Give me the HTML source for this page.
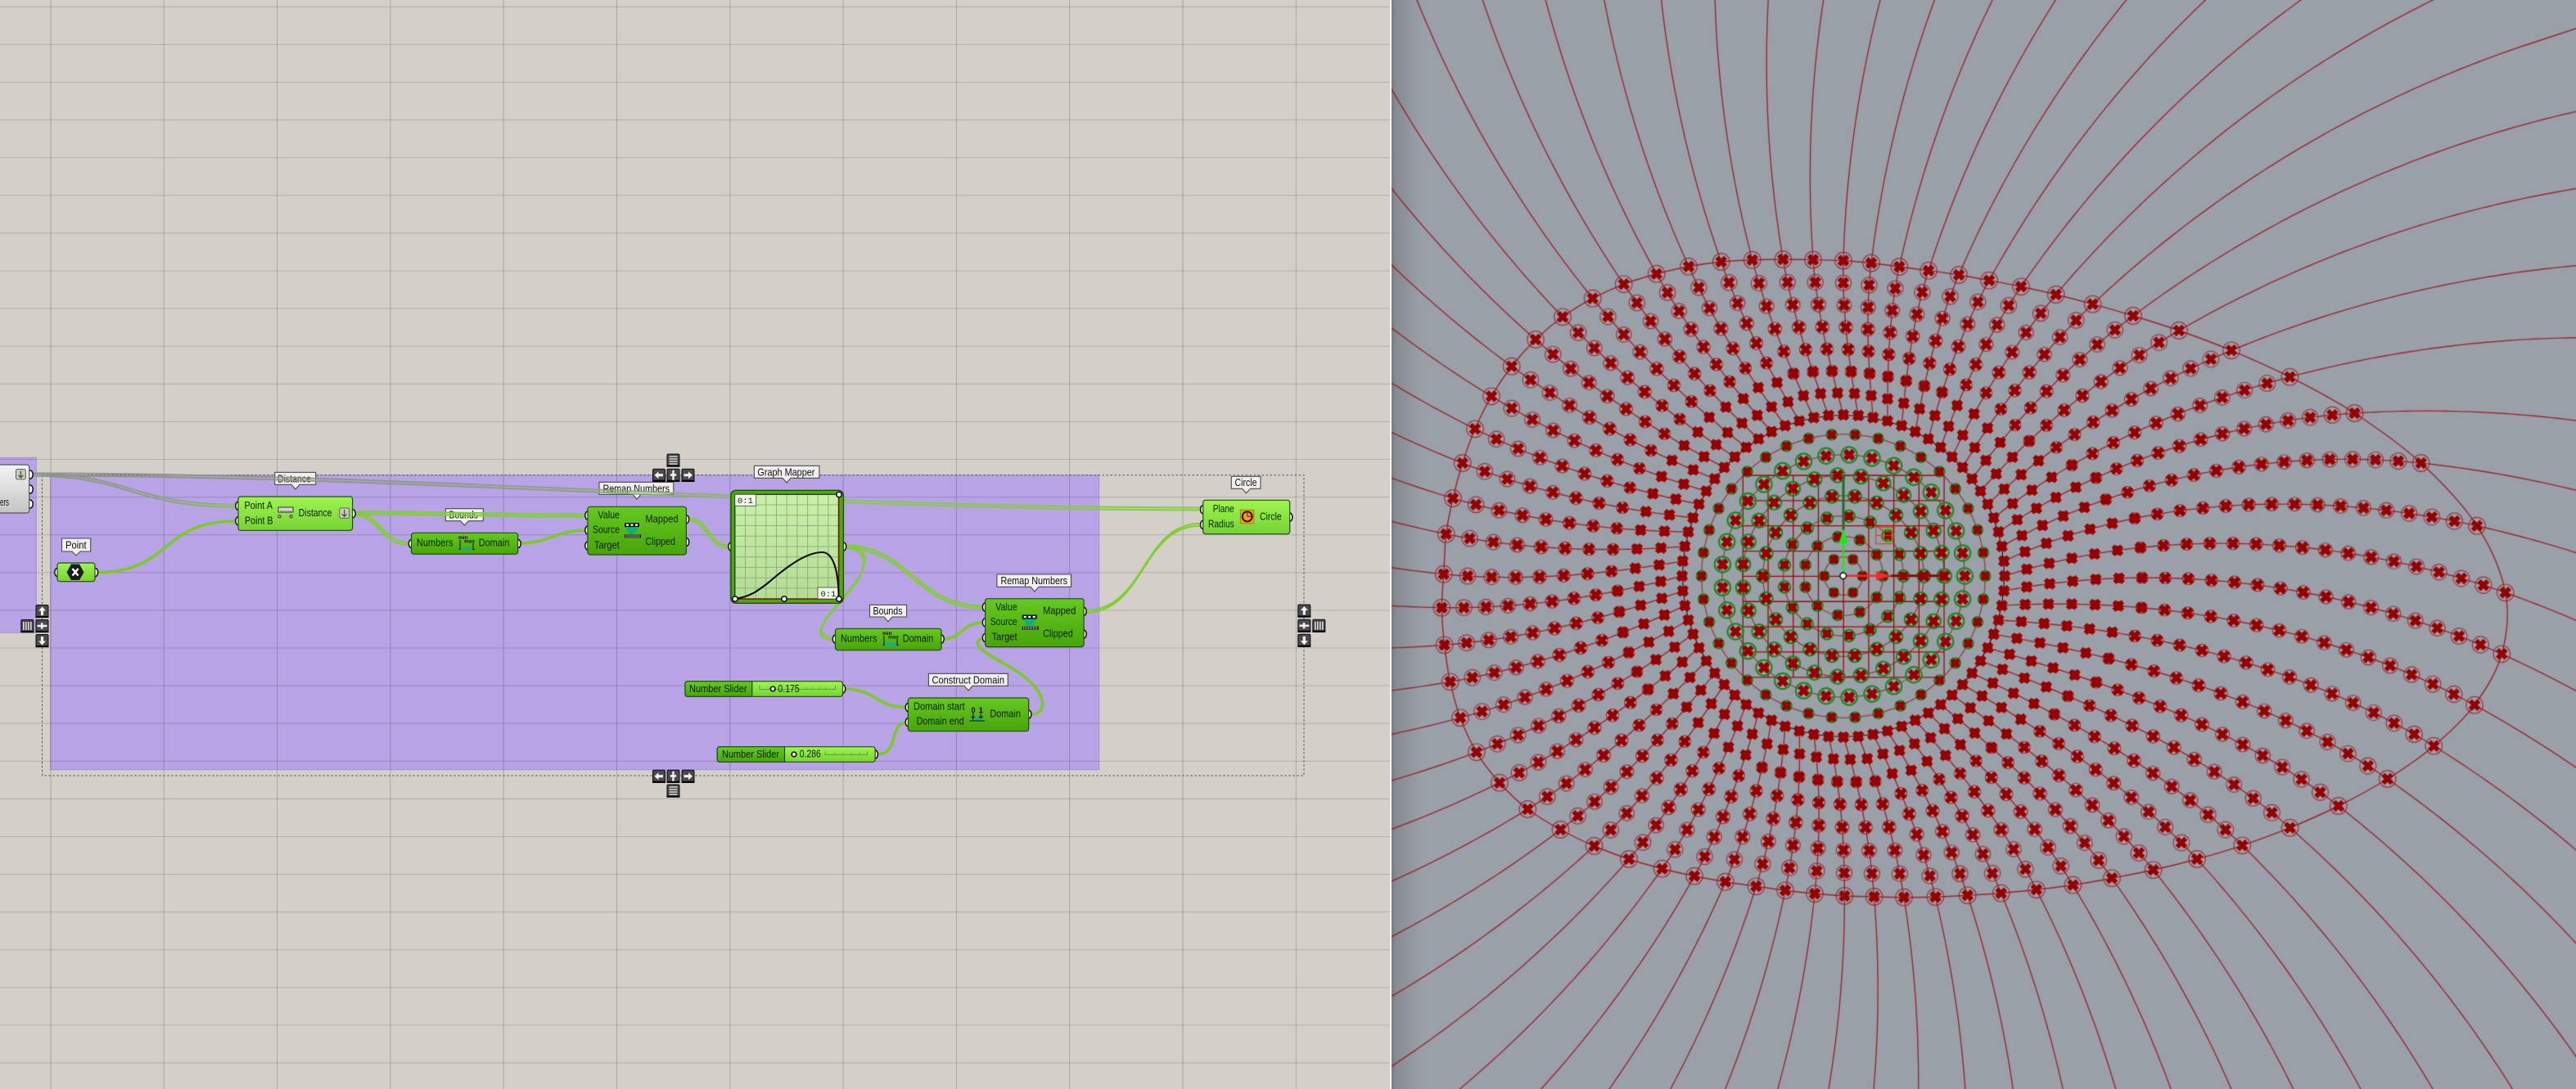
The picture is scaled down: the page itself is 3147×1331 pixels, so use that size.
<!DOCTYPE html>
<html lang="en">
<head>
<meta charset="utf-8">
<title>Grasshopper canvas and Rhino viewport</title>
<style>
html,body{margin:0;padding:0;width:3147px;height:1331px;overflow:hidden;background:#d4d0c9}
#gh{position:absolute;left:0;top:0;width:1700px;height:1331px}
#vp{position:absolute;left:1700px;top:0;width:1447px;height:1331px;display:block;background:#9aa0a8}
text{font-family:"Liberation Sans",sans-serif;font-size:12.5px;fill:#0a2000}
.l{font-size:13px;fill:#111}
.m{font-family:"Liberation Mono",monospace;font-size:10.5px;fill:#222}
.w{fill:none;stroke:#7fcf30;stroke-width:2.2}
.s{fill:none;stroke:#7bcb24;stroke-width:3.6}
.g{fill:#fff;stroke:#111;stroke-width:1.5}
.c{stroke:#1f4d10;stroke-width:1.2}
.lb{fill:#efefef;stroke:#4a4a4a;stroke-width:1.1}
</style>
</head>
<body>
<svg id="gh" width="1700" height="1331" viewBox="0 0 1700 1331" xmlns="http://www.w3.org/2000/svg">
<defs>
<linearGradient id="gB" x1="0" y1="0" x2="0" y2="1"><stop offset="0" stop-color="#a0f450"/><stop offset="1" stop-color="#76d333"/></linearGradient>
<linearGradient id="gD" x1="0" y1="0" x2="0" y2="1"><stop offset="0" stop-color="#66c820"/><stop offset="1" stop-color="#48a50a"/></linearGradient>
<linearGradient id="gG" x1="0" y1="0" x2="0" y2="1"><stop offset="0" stop-color="#c9f0a8"/><stop offset="1" stop-color="#b4dc95"/></linearGradient>
<linearGradient id="gY" x1="0" y1="0" x2="0" y2="1"><stop offset="0" stop-color="#f4f4f4"/><stop offset="1" stop-color="#c4c4c4"/></linearGradient>
<linearGradient id="wA" gradientUnits="userSpaceOnUse" x1="37" y1="0" x2="1467" y2="0"><stop offset="0" stop-color="#8d9389"/><stop offset=".45" stop-color="#8f9f82"/><stop offset=".68" stop-color="#8cc45a"/><stop offset="1" stop-color="#84d038"/></linearGradient>
<linearGradient id="wB" gradientUnits="userSpaceOnUse" x1="37" y1="0" x2="289" y2="0"><stop offset="0" stop-color="#8d9389"/><stop offset=".6" stop-color="#8f9f82"/><stop offset="1" stop-color="#8cbe5c"/></linearGradient>
<g id="bt"><rect x=".5" y=".5" width="15" height="15" rx="1.5" fill="#4a4a4a" stroke="#0c0c0c"/><rect x="0" y="14" width="16" height="2.2" fill="#000"/></g>
<path id="aU" fill="#f2f2f2" d="M8 2.5L12.5 7.5H9.6V13H6.4V7.5H3.5Z"/>
<path id="aD" fill="#f2f2f2" d="M8 13.5L12.5 8.5H9.6V3H6.4V8.5H3.5Z"/>
<path id="aL" fill="#f2f2f2" d="M2.5 8L7.5 3.5V6.4H13V9.6H7.5V12.5Z"/>
<path id="aR" fill="#f2f2f2" d="M13.5 8L8.5 3.5V6.4H3V9.6H8.5V12.5Z"/>
<path id="aV" fill="#f2f2f2" d="M6.8 2H9.2V6.4H11.6V9H9.2V14H6.8V9H4.4V6.4H6.8Z"/>
<path id="aH" fill="#f2f2f2" d="M2 6.8H6.4V4.4H9V6.8H14V9.2H9V11.6H6.4V9.2H2Z"/>
<path id="aE" fill="none" stroke="#d8d8d8" stroke-width="1.6" d="M3 3.5H13M3 6.5H13M3 9.5H13M3 12.5H13"/>
<path id="aW" fill="none" stroke="#d8d8d8" stroke-width="1.6" d="M3.5 3V13M6.5 3V13M9.5 3V13M12.5 3V13"/>
<g id="arr"><rect x="0" y="0" width="11.8" height="12.4" rx="2" fill="#c8cdc0" stroke="#5b6156" stroke-width="1"/><path d="M5.9 2V10M3 7.2L5.9 10.4L8.8 7.2" fill="none" stroke="#444" stroke-width="1.2"/></g>
</defs>

<rect width="1700" height="1331" fill="#d4d0c9"/>
<!-- groups -->
<rect x="-2" y="559.3" width="46.4" height="214" fill="#b8a3e6" stroke="#a594cf" stroke-width="1"/>
<rect x="61.7" y="580.7" width="1281" height="360" fill="#b8a3e6" stroke="#a291cf" stroke-width="1"/>
<!-- grid -->
<g stroke="#000" stroke-opacity=".14" stroke-width="1.1">
<path d="M0 8.3H1698M0 54.4H1698M0 100.5H1698M0 146.6H1698M0 192.7H1698M0 238.8H1698M0 284.9H1698M0 331H1698M0 377.1H1698M0 423.2H1698M0 469.3H1698M0 515.4H1698M0 561.5H1698M0 607.6H1698M0 653.7H1698M0 699.8H1698M0 745.9H1698M0 792H1698M0 838.1H1698M0 884.2H1698M0 930.3H1698M0 976.4H1698M0 1022.5H1698M0 1068.6H1698M0 1114.7H1698M0 1160.8H1698M0 1206.9H1698M0 1253H1698M0 1299.1H1698"/>
<path stroke-opacity=".18" d="M62 0V1331M200.3 0V1331M338.6 0V1331M476.9 0V1331M615.2 0V1331M753.5 0V1331M891.8 0V1331M1030.1 0V1331M1168.4 0V1331M1306.7 0V1331M1445 0V1331M1583.3 0V1331"/>
</g>
<rect x="51.5" y="580.7" width="1541.5" height="367.3" fill="none" stroke="#555" stroke-width="1" stroke-dasharray="2.5 2.5"/>
<rect x="1698" y="0" width="2" height="1331" fill="#f4f4f2"/>

<!-- labels -->
<g>
<path class="lb" d="M75.5 658H110.7V674H98L93 679L88 674H75.5Z"/><text class="l" x="80" y="670.5" textLength="25.6" lengthAdjust="spacingAndGlyphs">Point</text>
<path class="lb" d="M335.7 577.3H385.7V592.3H366L361 598L356 592.3H335.7Z"/><text class="l" x="339" y="589.3" textLength="41" lengthAdjust="spacingAndGlyphs">Distance</text>
<path class="lb" d="M544.4 621.7H590.3V636.7H572.5L567.5 642L562.5 636.7H544.4Z"/><text class="l" x="548.5" y="633.5" textLength="35.5" lengthAdjust="spacingAndGlyphs">Bounds</text>
<path class="lb" d="M732 589.3H822.8V604.3H783L778 610L773 604.3H732Z"/><text class="l" x="736.5" y="601.3" textLength="81.5" lengthAdjust="spacingAndGlyphs">Remap Numbers</text>
<path class="lb" d="M921.4 569.3H1000.9V584.3H966L961 590L956 584.3H921.4Z"/><text class="l" x="925.4" y="581.3" textLength="70" lengthAdjust="spacingAndGlyphs">Graph Mapper</text>
<path class="lb" d="M1062.5 739.3H1107.6V754H1090L1085 759.7L1080 754H1062.5Z"/><text class="l" x="1066.5" y="751" textLength="36" lengthAdjust="spacingAndGlyphs">Bounds</text>
<path class="lb" d="M1217.9 702H1308.5V717.3H1269L1264 723L1259 717.3H1217.9Z"/><text class="l" x="1222.5" y="713.8" textLength="81.5" lengthAdjust="spacingAndGlyphs">Remap Numbers</text>
<path class="lb" d="M1134.4 823.3H1231.3V838.3H1188L1183 844L1178 838.3H1134.4Z"/><text class="l" x="1138.5" y="835.3" textLength="88.5" lengthAdjust="spacingAndGlyphs">Construct Domain</text>
<path class="lb" d="M1504.3 582.3H1540V597.3H1527.5L1522.5 602.7L1517.5 597.3H1504.3Z"/><text class="l" x="1508.5" y="594" textLength="27" lengthAdjust="spacingAndGlyphs">Circle</text>
</g>

<!-- wires -->
<g fill="none" stroke-width="2.1" opacity=".95">
<path stroke="url(#wA)" d="M37 578.4C500 578.4 1000 620.4 1467 620.4"/>
<path stroke="url(#wA)" d="M37 581.4C500 581.4 1000 623.4 1467 623.4"/>
<path stroke="url(#wB)" d="M37 578.8C160 578.8 160 616.6 289 616.6"/>
<path stroke="url(#wB)" d="M37 581.6C160 581.6 160 619.8 289 619.8"/>
</g>
<path class="s" d="M119 699.5C210 699.5 195 637 288 637"/>
<g transform="translate(0,-1.5)">
<path class="w" d="M433 627C560 627 590 630 716 630"/><path class="w" d="M433 628C465 628 465 664.5 501 664.5"/><path class="w" d="M841 634.7C866 634.7 866 668 890 668"/><path class="w" d="M1032 668C1110 668 1120 742 1201 742"/><path class="w" d="M1032 668C1060 668 1065 690 1040 720C1015 750 985 778 1018 780.5"/><path class="w" d="M1326 747.3C1400 747.3 1395 641.3 1467 641.3"/>
</g>
<g transform="translate(-1,1.5)">
<path class="w" d="M433 627C560 627 590 630 716 630"/><path class="w" d="M433 628C465 628 465 664.5 501 664.5"/><path class="w" d="M841 634.7C866 634.7 866 668 890 668"/><path class="w" d="M1032 668C1110 668 1120 742 1201 742"/><path class="w" d="M1032 668C1060 668 1065 690 1040 720C1015 750 985 778 1018 780.5"/><path class="w" d="M1326 747.3C1400 747.3 1395 641.3 1467 641.3"/>
</g>
<path class="s" d="M636 664C670 664 680 648 716 648"/>
<path class="s" d="M1152 781C1175 781 1175 761 1201 761"/>
<path class="s" d="M1259 873C1280 873 1278 850 1255 830C1230 808 1175 790 1201 779.5"/>
<path class="s" d="M1031 842C1070 842 1070 864.5 1108 864.5"/>
<path class="s" d="M1071 922C1100 922 1085 883 1108 883"/>

<!-- grips -->
<g class="g">
<ellipse cx="37" cy="580" rx="3.2" ry="5"/><ellipse cx="37" cy="598" rx="3.2" ry="5"/><ellipse cx="37" cy="616" rx="3.2" ry="5"/>
<ellipse cx="70" cy="699.5" rx="3.2" ry="5"/><ellipse cx="116.5" cy="699.5" rx="3.2" ry="5"/>
<ellipse cx="291" cy="618.3" rx="3.2" ry="5"/><ellipse cx="291" cy="636.7" rx="3.2" ry="5"/><ellipse cx="431" cy="627.7" rx="3.2" ry="5"/>
<ellipse cx="502.5" cy="664.5" rx="3.2" ry="5"/><ellipse cx="633" cy="664.5" rx="3.2" ry="5"/>
<ellipse cx="718" cy="630" rx="3.2" ry="5"/><ellipse cx="718" cy="648" rx="3.2" ry="5"/><ellipse cx="718" cy="667" rx="3.2" ry="5"/><ellipse cx="838.5" cy="634.7" rx="3.2" ry="5"/><ellipse cx="838.5" cy="662.5" rx="3.2" ry="5"/>
<ellipse cx="893" cy="668" rx="3.2" ry="5"/><ellipse cx="1030.5" cy="668" rx="3.2" ry="5"/>
<ellipse cx="1020.5" cy="781" rx="3.2" ry="5"/><ellipse cx="1150" cy="781" rx="3.2" ry="5"/>
<ellipse cx="1203.6" cy="742" rx="3.2" ry="5"/><ellipse cx="1203.6" cy="760.7" rx="3.2" ry="5"/><ellipse cx="1203.6" cy="779.4" rx="3.2" ry="5"/><ellipse cx="1324" cy="747.3" rx="3.2" ry="5"/><ellipse cx="1324" cy="775" rx="3.2" ry="5"/>
<ellipse cx="1029.5" cy="842" rx="3.2" ry="5"/><ellipse cx="1069.2" cy="922" rx="3.2" ry="5"/>
<ellipse cx="1109.4" cy="864.5" rx="3.2" ry="5"/><ellipse cx="1109.4" cy="882.7" rx="3.2" ry="5"/><ellipse cx="1256.7" cy="873" rx="3.2" ry="5"/>
<ellipse cx="1469.7" cy="622.7" rx="3.2" ry="5"/><ellipse cx="1469.7" cy="641.3" rx="3.2" ry="5"/><ellipse cx="1575.7" cy="632" rx="3.2" ry="5"/>
</g>

<!-- left partial component -->
<rect class="c" x="-6" y="568" width="41.7" height="59" rx="3" fill="url(#gY)" style="stroke:#555"/>
<use href="#arr" x="19.5" y="573.5"/>
<text x="0" y="618" textLength="11" lengthAdjust="spacingAndGlyphs">ers</text>

<!-- Point -->
<rect class="c" x="70" y="688" width="46" height="22.7" rx="3" fill="url(#gB)"/>
<path d="M87 689.5H97L102.5 699.5L97 709H87L81.5 699.5Z" fill="#1c1c1c"/>
<path d="M88.5 695L95.5 703.5M95.5 695L88.5 703.5" stroke="#fff" stroke-width="2.4" fill="none"/>

<!-- Distance -->
<rect class="c" x="291" y="607" width="139.6" height="41.3" rx="3" fill="url(#gB)"/>
<text x="298.5" y="622" textLength="34.5" lengthAdjust="spacingAndGlyphs">Point A</text>
<text x="299" y="640.3" textLength="34.5" lengthAdjust="spacingAndGlyphs">Point B</text>
<text x="364.8" y="631" textLength="40.8" lengthAdjust="spacingAndGlyphs">Distance</text>
<rect x="340" y="620" width="18" height="6" fill="#d8d8d8" stroke="#333" stroke-width="1"/>
<path d="M343 623.5V626M346 623.5V626M349 623.5V626M352 623.5V626M355 623.5V626" stroke="#333" stroke-width=".6"/>
<circle cx="341.5" cy="631.3" r="1.6" fill="#c7dca8" stroke="#222" stroke-width=".9"/><circle cx="355.6" cy="631.3" r="1.6" fill="#c7dca8" stroke="#222" stroke-width=".9"/>
<use href="#arr" x="414.8" y="621"/>

<!-- Bounds 1 -->
<g id="bd1">
<rect class="c" x="502.5" y="651.3" width="130.2" height="26" rx="3" fill="url(#gD)"/>
<text x="509" y="667.5" textLength="44.5" lengthAdjust="spacingAndGlyphs">Numbers</text>
<text x="584.7" y="667.5" textLength="37.7" lengthAdjust="spacingAndGlyphs">Domain</text>
<text x="560" y="659" style="font-size:6.5px;font-weight:bold;fill:#111">min</text>
<text x="567" y="663.5" style="font-size:6.5px;font-weight:bold;fill:#111">max</text>
<path d="M562 660V672M578 664V672M560.5 671.5H580" stroke="#111" stroke-width="1" fill="none"/>
<rect x="562.5" y="669" width="15" height="3.2" fill="#12b08a"/>
</g>

<!-- Remap 1 -->
<g>
<rect class="c" x="717.9" y="619.3" width="120.5" height="58.7" rx="3" fill="url(#gD)"/>
<text x="730.4" y="633.6" textLength="26.6" lengthAdjust="spacingAndGlyphs">Value</text>
<text x="724" y="651.6" textLength="33" lengthAdjust="spacingAndGlyphs">Source</text>
<text x="725.9" y="670.3" textLength="31" lengthAdjust="spacingAndGlyphs">Target</text>
<text x="788.4" y="638.3" textLength="40.2" lengthAdjust="spacingAndGlyphs">Mapped</text>
<text x="788.4" y="666" textLength="36.6" lengthAdjust="spacingAndGlyphs">Clipped</text>
<rect x="763" y="639" width="18" height="5.2" fill="#111"/>
<path d="M765 640.5h3v2.2h-3zM770.5 640.5h3v2.2h-3zM776 640.5h3v2.2h-3z" fill="#fff"/>
<path d="M763.5 644.2H780.5L775 652.7H769Z" fill="#0eb078"/>
<rect x="763" y="653.3" width="20" height="4" fill="#111"/>
<path d="M765 653.5V657M767 653.5V657M769 653.5V657M771 653.5V657M773 653.5V657M775 653.5V657M777 653.5V657M779 653.5V657M781 653.5V657" stroke="#ccc" stroke-width=".8"/>
</g>

<!-- Graph Mapper -->
<rect x="892.9" y="599.3" width="137.5" height="138" rx="6" fill="#4eaa0c" stroke="#1f4d10" stroke-width="1.4"/>
<rect x="897.8" y="604.3" width="126.8" height="127.7" fill="url(#gG)"/>
<g stroke="#93b07c" stroke-width="1">
<path d="M910.5 604.3V732M923.2 604.3V732M935.8 604.3V732M948.5 604.3V732M961.2 604.3V732M973.9 604.3V732M986.6 604.3V732M999.2 604.3V732M1011.9 604.3V732"/>
<path d="M897.8 617H1024.6M897.8 629.7H1024.6M897.8 642.5H1024.6M897.8 655.2H1024.6M897.8 668H1024.6M897.8 680.7H1024.6M897.8 693.4H1024.6M897.8 706.2H1024.6M897.8 718.9H1024.6"/>
</g>
<path d="M897.8 732V604.3H1024.6" fill="none" stroke="#10260a" stroke-width="1.2"/>
<path d="M897.8 732H1024.6V604.3" fill="none" stroke="#6e1b00" stroke-width="1.6"/>
<rect x="897.8" y="604.3" width="25.9" height="14" fill="#f0f8e6" stroke="#444" stroke-width=".8"/>
<text class="m" x="901" y="615">0:1</text>
<rect x="999" y="718" width="25.6" height="14" fill="#f0f8e6" stroke="#444" stroke-width=".8"/>
<text class="m" x="1002.5" y="729">0:1</text>
<path d="M897.8 731.7C915 730 925 723 940 711C962 692 985 675 1004.5 675C1015 675 1024.5 690 1024.6 731.7" fill="none" stroke="#0c0c0c" stroke-width="2.1"/>
<g class="g" style="stroke-width:1.6"><circle cx="1025" cy="604.5" r="3.2"/><circle cx="1025" cy="732" r="3.2"/><circle cx="898" cy="732" r="3.2"/><circle cx="958" cy="732" r="3.2"/></g>

<!-- Bounds 2 -->
<g transform="translate(518,117)">
<rect class="c" x="502.5" y="651.3" width="129.5" height="26.4" rx="3" fill="url(#gD)"/>
<text x="509" y="667.5" textLength="44.5" lengthAdjust="spacingAndGlyphs">Numbers</text>
<text x="584.7" y="667.5" textLength="37.7" lengthAdjust="spacingAndGlyphs">Domain</text>
<text x="560" y="659" style="font-size:6.5px;font-weight:bold;fill:#111">min</text>
<text x="567" y="663.5" style="font-size:6.5px;font-weight:bold;fill:#111">max</text>
<path d="M562 660V672M578 664V672M560.5 671.5H580" stroke="#111" stroke-width="1" fill="none"/>
<rect x="562.5" y="669" width="15" height="3.2" fill="#12b08a"/>
</g>

<!-- Remap 2 -->
<g transform="translate(485.7,112.4)">
<rect class="c" x="717.9" y="619.3" width="120.5" height="58.9" rx="3" fill="url(#gD)"/>
<text x="730.4" y="633.6" textLength="26.6" lengthAdjust="spacingAndGlyphs">Value</text>
<text x="724" y="651.6" textLength="33" lengthAdjust="spacingAndGlyphs">Source</text>
<text x="725.9" y="670.3" textLength="31" lengthAdjust="spacingAndGlyphs">Target</text>
<text x="788.4" y="638.3" textLength="40.2" lengthAdjust="spacingAndGlyphs">Mapped</text>
<text x="788.4" y="666" textLength="36.6" lengthAdjust="spacingAndGlyphs">Clipped</text>
<rect x="763" y="639" width="18" height="5.2" fill="#111"/>
<path d="M765 640.5h3v2.2h-3zM770.5 640.5h3v2.2h-3zM776 640.5h3v2.2h-3z" fill="#fff"/>
<path d="M763.5 644.2H780.5L775 652.7H769Z" fill="#0eb078"/>
<rect x="763" y="653.3" width="20" height="4" fill="#111"/>
<path d="M765 653.5V657M767 653.5V657M769 653.5V657M771 653.5V657M773 653.5V657M775 653.5V657M777 653.5V657M779 653.5V657M781 653.5V657" stroke="#ccc" stroke-width=".8"/>
</g>

<!-- Sliders -->
<rect class="c" x="837" y="832.7" width="192.5" height="18.6" rx="3" fill="url(#gB)"/>
<path class="c" d="M840 832.7H918.8V851.3H840Q837 851.3 837 848.3V835.7Q837 832.7 840 832.7Z" fill="url(#gD)"/>
<text x="842" y="845.8" textLength="70.5" lengthAdjust="spacingAndGlyphs">Number Slider</text>
<path d="M927.7 838V842.5H1020.5V838M940 840V842.5M985 840V842.5M993 840V842.5M1001 840V842.5M1009 840V842.5" fill="none" stroke="#58a82a" stroke-width="1"/>
<circle cx="944.2" cy="842" r="2.8" fill="#fff" stroke="#111" stroke-width="1.7"/>
<text x="950.4" y="845.8" textLength="26.4" lengthAdjust="spacingAndGlyphs">0.175</text>

<rect class="c" x="876.3" y="912.7" width="192.9" height="18.6" rx="3" fill="url(#gB)"/>
<path class="c" d="M879.3 912.7H958.5V931.3H879.3Q876.3 931.3 876.3 928.3V915.7Q876.3 912.7 879.3 912.7Z" fill="url(#gD)"/>
<text x="882" y="925.8" textLength="70" lengthAdjust="spacingAndGlyphs">Number Slider</text>
<path d="M1008 918V922.5H1059.5V918M1020 920V922.5M1030 920V922.5M1040 920V922.5M1050 920V922.5" fill="none" stroke="#58a82a" stroke-width="1"/>
<circle cx="970" cy="922" r="2.8" fill="#fff" stroke="#111" stroke-width="1.7"/>
<text x="976.8" y="925.3" textLength="26" lengthAdjust="spacingAndGlyphs">0.286</text>

<!-- Construct Domain -->
<rect class="c" x="1109.4" y="853" width="147.3" height="40.7" rx="3" fill="url(#gD)"/>
<text x="1116" y="867.3" textLength="62.6" lengthAdjust="spacingAndGlyphs">Domain start</text>
<text x="1119.6" y="885.6" textLength="58.1" lengthAdjust="spacingAndGlyphs">Domain end</text>
<text x="1209.4" y="876.3" textLength="37.5" lengthAdjust="spacingAndGlyphs">Domain</text>
<text x="1186.4" y="871" style="font-size:9.5px;font-weight:bold;fill:#111">0</text>
<text x="1195.6" y="871" style="font-size:9.5px;font-weight:bold;fill:#111">1</text>
<path d="M1188.8 871V880M1198.2 871V880M1186.5 875.5L1188.8 878L1191 875.5M1196 875.5L1198.2 878L1200.5 875.5" stroke="#111" stroke-width="1" fill="none"/>
<rect x="1189" y="877.7" width="10" height="3.4" fill="#12b08a"/>
<path d="M1184.5 881H1203" stroke="#111" stroke-width="1"/>

<!-- Circle -->
<rect class="c" x="1469.7" y="611.3" width="106" height="41.4" rx="3" fill="url(#gB)"/>
<text x="1481.7" y="626" textLength="26" lengthAdjust="spacingAndGlyphs">Plane</text>
<text x="1476" y="644.3" textLength="31.7" lengthAdjust="spacingAndGlyphs">Radius</text>
<text x="1539" y="635.3" textLength="26.7" lengthAdjust="spacingAndGlyphs">Circle</text>
<rect x="1515.3" y="623.3" width="16.4" height="16.4" fill="#f59f14" stroke="#d9650a" stroke-width="1"/>
<path d="M1523.7 631.3V625.8M1523.7 631.3H1530" stroke="#d8160a" stroke-width="1.3" fill="none"/>
<circle cx="1523.7" cy="631.3" r="6" fill="none" stroke="#111" stroke-width="1.9"/>

<!-- buttons -->
<g>
<use href="#bt" x="814.5" y="554.5"/><use href="#aE" x="814.5" y="554.5"/>
<use href="#bt" x="797" y="572.7"/><use href="#aL" x="797" y="572.7"/>
<use href="#bt" x="814.5" y="572.7"/><use href="#aV" x="814.5" y="572.7"/>
<use href="#bt" x="832.5" y="572.7"/><use href="#aR" x="832.5" y="572.7"/>
<use href="#bt" x="797" y="940.7"/><use href="#aL" x="797" y="940.7"/>
<use href="#bt" x="814.5" y="940.7"/><use href="#aV" x="814.5" y="940.7"/>
<use href="#bt" x="832.5" y="940.7"/><use href="#aR" x="832.5" y="940.7"/>
<use href="#bt" x="814.5" y="958.5"/><use href="#aE" x="814.5" y="958.5"/>
<use href="#bt" x="43.5" y="739"/><use href="#aU" x="43.5" y="739"/>
<use href="#bt" x="43.5" y="757"/><use href="#aH" x="43.5" y="757"/>
<use href="#bt" x="43.5" y="775"/><use href="#aD" x="43.5" y="775"/>
<use href="#bt" x="25.3" y="757"/><use href="#aW" x="25.3" y="757"/>
<use href="#bt" x="1585.3" y="738.5"/><use href="#aU" x="1585.3" y="738.5"/>
<use href="#bt" x="1585.3" y="756.7"/><use href="#aH" x="1585.3" y="756.7"/>
<use href="#bt" x="1585.3" y="774.7"/><use href="#aD" x="1585.3" y="774.7"/>
<use href="#bt" x="1603.3" y="756.7"/><use href="#aW" x="1603.3" y="756.7"/>
</g>
</svg>

<canvas id="vp" width="1447" height="1331"></canvas>
<script>
(function(){
var cv=document.getElementById('vp'),x=cv.getContext('2d');
var D=Math.PI/180,CX=2252,CY=704,R0=197;
x.translate(-1700,0);
x.fillStyle='#9aa0a8';x.fillRect(1700,0,1447,1331);
var g=x.createLinearGradient(1700,0,1738,0);
g.addColorStop(0,'#767c80');g.addColorStop(.15,'#868c91');g.addColorStop(1,'#9aa0a8');
x.fillStyle=g;x.fillRect(1700,0,38,1331);

var O=[[3060.7,724.3],[3026,642.7],[2957.7,566],[2876.5,505],[2797.4,460.7],[2726,428.3],[2662,404],[2606,386],[2556.6,371.7],[2511.7,360],[2469,350.3],[2430,342.7],[2393,336],[2356,330.7],[2320.4,326],[2286,321.5],[2252,318.5],[2215,317.5],[2178.3,317],[2140.7,317.7],[2102.7,320],[2063,325.7],[2023.7,334.7],[1983.7,347.3],[1945.7,364.7],[1909,387.3],[1876,415],[1846.7,447.7],[1822,484.3],[1802,524.3],[1786.7,566],[1775,609],[1766.7,652.7],[1763.7,701.7],[1761.4,742.7],[1764.6,788.3],[1771.7,833.3],[1784,877.3],[1803.8,919.3],[1832,956.7],[1866.3,989],[1906.5,1014],[1947.6,1034],[1990,1050],[2030.6,1061.7],[2070,1070.7],[2107.9,1077.7],[2145.4,1083.3],[2181,1088.3],[2217,1092.3],[2253.4,1095],[2289.6,1096],[2326,1096.7],[2364.4,1096.3],[2403.7,1094.3],[2444.7,1091.7],[2487.8,1087.3],[2532.4,1081.7],[2580,1073.3],[2630.6,1063.3],[2684,1050],[2739.3,1033.3],[2797.6,1011.7],[2856.8,985],[2916.7,952],[2973.3,911.7],[3023,861.7],[3056.3,799.3]];
var N=68;
function interp(tb,i){
  for(var k=0;k<tb.length;k++){
    var a=tb[k],b=tb[(k+1)%tb.length],bi=b[0];if(k==tb.length-1)bi+=N;
    var ii=i;if(ii<a[0])ii+=N;
    if(ii>=a[0]&&ii<=bi){return a[1]+(b[1]-a[1])*(ii-a[0])/(bi-a[0]);}
  }
  return tb[0][1];
}
var d2=[[0,-18],[1,-17],[2,-17],[3,-14],[4,-9],[6,-6],[9,-3],[18,-1],[32,-5.5],[42,-4.4],[50,0],[58,-6],[63,-13],[66,-17]];
var d1=[[0,18],[1,20],[4,17],[9,17],[18,15],[32,15],[42,14],[50,19],[58,14],[63,10],[66,14]];

var RED='#970000';
x.strokeStyle='#970808';x.lineWidth=1.3;x.beginPath();
for(var i=0;i<9;i++){
  var gx=2129.3+i*30.72,gy=581+i*30.85;
  x.moveTo(gx,581);x.lineTo(gx,827.8);
  x.moveTo(2129.3,gy);x.lineTo(2375,gy);
}
x.stroke();

var marks=[];
for(var i=0;i<N;i++){
  var a=i*360/N*D,p0=[CX+R0*Math.cos(a),CY-R0*Math.sin(a)],p1=O[i];
  var L=Math.hypot(p1[0]-p0[0],p1[1]-p0[1]);
  var ta=a+interp(d1,i)*D;
  var b=Math.atan2(CY-p1[1],p1[0]-CX);
  var tb=b+interp(d2,i)*D;
  var m0=[L*Math.cos(ta),-L*Math.sin(ta)],m1=[L*Math.cos(tb),-L*Math.sin(tb)];
  var pts=[],S=120;
  for(var k=0;k<=S;k++){
    var t=k/S,t2=t*t,t3=t2*t,
    h00=2*t3-3*t2+1,h10=t3-2*t2+t,h01=-2*t3+3*t2,h11=t3-t2;
    pts.push([h00*p0[0]+h10*m0[0]+h01*p1[0]+h11*m1[0],h00*p0[1]+h10*m0[1]+h01*p1[1]+h11*m1[1]]);
  }
  var arc=[0];
  for(k=1;k<=S;k++)arc[k]=arc[k-1]+Math.hypot(pts[k][0]-pts[k-1][0],pts[k][1]-pts[k-1][1]);
  var tot=arc[S],n=Math.max(2,Math.round(tot/28));
  x.strokeStyle='rgba(150,12,22,.82)';x.lineWidth=1.4;x.beginPath();
  x.moveTo(pts[0][0],pts[0][1]);
  for(k=1;k<=S;k++)x.lineTo(pts[k][0],pts[k][1]);
  var px=p1[0],py=p1[1],ang=tb,s=0;
  for(k=0;k<200;k++){
    var st=8;
    ang-=Math.min(.04*st,s<625?.04*st:0)*D;
    s+=st;px+=st*Math.cos(ang);py-=st*Math.sin(ang);
    x.lineTo(px,py);
    if(px<1690||px>3157||py<-10||py>1341)break;
  }
  x.stroke();
  var q=0;
  for(var j=0;j<=n;j++){
    var tg=tot*j/n;
    while(q<S&&arc[q+1]<tg)q++;
    var f=q<S?(tg-arc[q])/(arc[q+1]-arc[q]||1):0,
    e=pts[Math.min(q+1,S)];
    var tt=j/n;
    marks.push({x:pts[q][0]+(e[0]-pts[q][0])*f,y:pts[q][1]+(e[1]-pts[q][1])*f,r:5.5+4.8*tt,t:tt,k:j==0?'blob':(tt<.3?'blob2':'x')});
  }
}
x.strokeStyle='rgba(150,12,22,.85)';x.lineWidth=1.4;x.beginPath();
for(i=0;i<N;i++){
  var p=O[(i+N-1)%N],c=O[i],d=O[(i+1)%N],e2=O[(i+2)%N];
  if(i==0)x.moveTo(c[0],c[1]);
  x.bezierCurveTo(c[0]+(d[0]-p[0])/6,c[1]+(d[1]-p[1])/6,d[0]-(e2[0]-c[0])/6,d[1]-(e2[1]-c[1])/6,d[0],d[1]);
}
x.closePath();x.stroke();
var counts=[6,11,17,22,27,33,38],gr=[5.8,6.4,7.2,8,8.8,9.7,6.2];
x.strokeStyle='rgba(150,20,30,.72)';x.lineWidth=1.3;
for(i=0;i<7;i++){x.beginPath();x.arc(CX,CY,23.3+25*i,0,7);x.stroke();}
x.strokeStyle='#16181c';x.lineWidth=1.2;x.beginPath();x.arc(CX,CY,196.5,0,7);x.stroke();
var inner=[];
for(i=0;i<7;i++){
  var r=23.3+25*i;
  for(j=0;j<counts[i];j++){
    var an=j*2*Math.PI/counts[i];
    inner.push({x:CX+r*Math.cos(an),y:CY-r*Math.sin(an),r:gr[i],ring:i});
  }
}
function drawX(m,sz,lw){
  x.strokeStyle=RED;x.lineWidth=lw;x.beginPath();
  x.moveTo(m.x-sz,m.y-sz);x.lineTo(m.x+sz,m.y+sz);
  x.moveTo(m.x+sz,m.y-sz);x.lineTo(m.x-sz,m.y+sz);x.stroke();
}
marks.forEach(function(m){
  if(m.t>.25){x.strokeStyle='rgba(158,26,36,.8)';x.lineWidth=1.2;x.beginPath();x.arc(m.x,m.y,m.r,0,7);x.stroke();}
});
marks.forEach(function(m){
  if(m.k!='x'){x.fillStyle=RED;x.beginPath();x.arc(m.x,m.y,5.8,0,7);x.fill();}
  drawX(m,5.3,5.6);
});
inner.forEach(function(m){
  x.strokeStyle='#0a8c14';x.lineWidth=2;x.beginPath();x.arc(m.x,m.y,m.r,0,7);x.stroke();
  if(m.ring<3||m.ring==6){x.fillStyle=RED;x.beginPath();x.arc(m.x,m.y,5,0,7);x.fill();drawX(m,4.6,4);}
  else drawX(m,5.3,5.6);
});
x.strokeStyle='#ee2a2a';x.lineWidth=1;x.strokeRect(2291.7,644.3,20.6,20.4);
x.beginPath();x.moveTo(2291.7,654.5);x.lineTo(2312.3,654.5);x.stroke();
x.strokeStyle='#25e025';x.strokeRect(2301.7,646,9.6,17);
x.lineCap='butt';
x.strokeStyle='#8a0707';x.lineWidth=3;x.beginPath();x.moveTo(2310,703.7);x.lineTo(2375,703.7);x.stroke();
x.strokeStyle='#ee2a2a';x.lineWidth=2.4;x.beginPath();x.moveTo(2252,703.7);x.lineTo(2295,703.7);x.stroke();
x.fillStyle='#ee2a2a';x.beginPath();x.moveTo(2310,703.7);x.lineTo(2292,698);x.lineTo(2292,709.5);x.closePath();x.fill();
x.strokeStyle='#1a6e20';x.lineWidth=3;x.beginPath();x.moveTo(2252,581);x.lineTo(2252,648);x.stroke();
x.strokeStyle='#1ce61c';x.lineWidth=2.4;x.beginPath();x.moveTo(2252,703.7);x.lineTo(2252,660);x.stroke();
x.fillStyle='#1ce61c';x.beginPath();x.moveTo(2252,646.5);x.lineTo(2246.5,664);x.lineTo(2257.5,664);x.closePath();x.fill();
x.fillStyle='#fff';x.strokeStyle='#0b0b0b';x.lineWidth=1.5;x.beginPath();x.arc(2251.7,703.7,3.8,0,7);x.fill();x.stroke();
})();
</script>
</body>
</html>
